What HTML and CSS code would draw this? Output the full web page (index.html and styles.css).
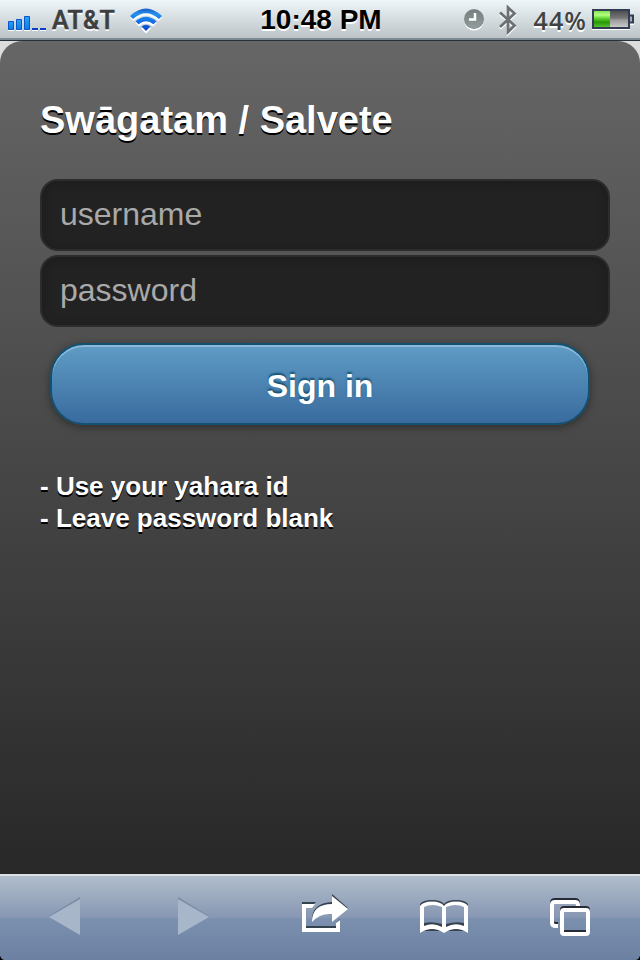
FILE: index.html
```html
<!DOCTYPE html>
<html lang="en">
<head>
<meta charset="utf-8">
<title>Sign in</title>
<link rel="stylesheet" href="styles.css">
</head>
<body>
<div class="phone">
  <header class="status">
    <div class="status-side">
      <svg class="signal" width="38" height="15" viewBox="0 0 38 15">
        <defs><linearGradient id="bar" x2="0" y2="1"><stop stop-color="#2ba2f3"/><stop offset="1" stop-color="#087bea"/></linearGradient></defs>
        <g fill="#fff"><path d="M0 14h6v1H0zM8 14h6v1H8zM16 14h6v1h-6zM24 14h6v1h-6zM32 14h6v1h-6z"/></g>
        <g fill="url(#bar)" stroke="#0757c9"><path d="M.5 5.500h5v8h-5z"/><path d="M8.500 3.500h5v10h-5z"/><path d="M16.500 .5h5v13h-5z"/></g>
        <path fill="#0b3fc5" d="M24 12h6v2h-6zM32 12h6v2h-6z"/>
      </svg>
      <span class="carrier">AT&amp;T</span>
      <svg class="wifi" width="34" height="26" viewBox="0 0 34 26">
        <defs><linearGradient id="wave" gradientUnits="userSpaceOnUse" x1="0" y1="0" x2="0" y2="24"><stop stop-color="#1b57bd"/><stop offset=".25" stop-color="#2591ee"/><stop offset=".5" stop-color="#1678e8"/><stop offset="1" stop-color="#0640c4"/></linearGradient></defs>
        <g fill="#fff" transform="translate(0 1.500)"><path d="M1 8Q17-7 33 8L29.500 11.500Q17 .5 4.500 11.500Z"/><path d="M6.500 13.500Q17 4 27.500 13.500L24 17Q17 11 10 17Z"/><path d="M12 19Q17 15 22 19L17 24Z"/></g>
        <g fill="url(#wave)"><path d="M1 8Q17-7 33 8L30 11Q17-.5 4 11Z"/><path d="M6.500 13.300Q17 4 27.500 13.300L24.500 16.300Q17 10 9.500 16.300Z"/><path d="M12.500 18.600Q17 15 21.500 18.600L17 23Z"/></g>
      </svg>
    </div>
    <div class="time">10:48 PM</div>
    <div class="status-side status-right">
      <svg class="alarm" width="20" height="22" viewBox="0 0 20 22">
        <defs><linearGradient id="clock" x2="0" y2="1"><stop stop-color="#77807f"/><stop offset="1" stop-color="#929d9d"/></linearGradient></defs>
        <circle cx="10" cy="11.500" r="10" fill="#fff"/><circle cx="10" cy="10" r="10" fill="#7b8584"/><circle cx="10" cy="10.500" r="9" fill="url(#clock)"/>
        <path fill="none" stroke="#fff" stroke-width="2.500" d="M11 4v6.500H5"/>
      </svg>
      <svg class="bluetooth" width="18" height="33" viewBox="0 0 18 33">
        <g fill="none" stroke-linejoin="miter" stroke-width="2.700"><path stroke="#fff" d="M1 10 15.500 23 9 29.500V4.500L15.500 11 1 24.500"/><path stroke="#6c7073" d="M1 8.500 15.500 21.500 9 28V3.500L15.500 9.500 1 23"/></g>
      </svg>
      <span class="percent">44%</span>
      <svg class="battery" width="42" height="22" viewBox="0 0 42 22">
        <defs>
          <linearGradient id="charge" x2="0" y2="1"><stop stop-color="#7fe256"/><stop offset=".25" stop-color="#b3ff82"/><stop offset=".45" stop-color="#63d633"/><stop offset=".7" stop-color="#279606"/><stop offset="1" stop-color="#55c12f"/></linearGradient>
          <linearGradient id="empty" x2="0" y2="1"><stop stop-color="#505050"/><stop offset=".45" stop-color="#777"/><stop offset=".55" stop-color="#999"/><stop offset="1" stop-color="#c9c9c9"/></linearGradient>
        </defs>
        <path fill="#fff" d="M0 19h38v2H0zM38 14h4v2h-4z"/>
        <path fill="#343c53" d="M0 0h38v20H0zM38 5.500h4v9h-4z"/><path fill="#a5abb5" d="M38 7.500h2v5h-2z"/>
        <path fill="url(#empty)" d="M2 2h34v16H2z"/><path fill="url(#charge)" d="M2 2h16v16H2z"/>
      </svg>
    </div>
  </header>
  <main class="page">
    <h1>Swāgatam / Salvete</h1>
    <form>
      <input type="text" placeholder="username" aria-label="username">
      <input type="password" placeholder="password" aria-label="password">
      <button type="button">Sign in</button>
    </form>
    <p class="hint">- Use your yahara id<br>- Leave password blank</p>
  </main>
  <nav class="toolbar">
    <svg viewBox="0 0 128 84"><path d="M0 80q1 3 4 4H0z"/><path fill="#788ca5" d="M49 40 80 21v3L49 41z"/><path fill="#a7b6c9" d="M49 41 80 23v36z"/></svg>
    <svg viewBox="0 0 128 84"><path fill="#788ca5" d="M81 40 50 21v3l31 17z"/><path fill="#a7b6c9" d="M81 41 50 23v36z"/></svg>
    <svg viewBox="0 0 128 84">
      <g fill="#36414e"><path d="M46 26h14l-4 4h-6v20h30v-3l4-4v11H46z"/><path d="M76 18 92 32 76 44v-9q-12-1-20 9 0-17 20-18z"/></g>
      <g fill="#fff"><path d="M46 28h13l-3 4h-6v20h30v-5l4-3v12H46z"/><path d="M76 20 92 33 76 46v-8q-12-1-20 8 0-18 20-18z"/></g>
    </svg>
    <svg viewBox="0 0 128 84">
      <g fill-rule="evenodd">
        <path fill="#36414e" d="M36 28q3-4 12-4 9 0 12 4 3-4 12-4 9 0 12 4v27H36zM40 30v17q8-2 18 1V30q-10-5-18 0zM62 30v18q10-3 18-1V30q-8-5-18 0z"/>
        <path fill="#fff" d="M36 30q3-4.500 12-4.500 9 0 12 4.500 3-4.500 12-4.500 9 0 12 4.500v27q-12-8-24 0-12-8-24 0zM40 31v19q9-4 18 1V31q-10-4-18 0zM62 31v20q9-5 18-1V31q-8-4-18 0z"/>
      </g>
    </svg>
    <svg viewBox="0 0 128 84">
      <g fill="none" stroke-width="4"><path stroke="#262b36" d="M46 48h-2q-4 0-4-3V27q0-3 3-3h20q3 0 3 3v3"/><path stroke="#fff" d="M46 50h-2q-4 0-4-3V29q0-3 3-3h20q3 0 3 3v1"/><rect x="50" y="32" width="26" height="24" rx="2" stroke="#262b36"/><rect x="50" y="34" width="26" height="24" rx="2" stroke="#fff"/></g>
      <path d="M128 80q-1 3-4 4h4z"/>
    </svg>
  </nav>
</div>
</body>
</html>
```
FILE: styles.css
```css
* { box-sizing: border-box; }
body { margin: 0; background: #ddd; font-family: "Liberation Sans", Arial, sans-serif; }
.phone { width: 640px; height: 960px; display: flex; flex-direction: column; background: #ddd; overflow: hidden; }
.status { height: 41px; flex: none; display: grid; grid-template: 39px / 1fr auto 1fr; padding: 0 6px 0 8px; background: linear-gradient(#eff6fa, #bdc4c8 38px); border-bottom: 1px solid #26323d; box-shadow: inset 0 -2px #7d8a94; text-shadow: 0 2px #fff; }
.status-side { display: flex; align-items: center; }
.signal { margin-top: 8px; }
.carrier { font: 500 25px/36px Roboto, sans-serif; color: #3d3f40; margin: 3px 0 0 6px; width: 64px; letter-spacing: .4px; -webkit-text-stroke: .6px #3d3f40; }
.wifi { margin: 2px 0 0 13px; }
.time { font-weight: bold; font-size: 28px; line-height: 38px; padding-top: 1px; color: #000; }
.status-right { justify-content: flex-end; }
.alarm { margin-top: 1px; }
.bluetooth { margin: 1px 0 0 15px; }
.percent { font: 600 25px/36px "Open Sans", sans-serif; color: #414343; margin: 0 5px 0 17px; letter-spacing: 1.1px; }
.battery { margin-top: 1px; }
.page { flex: 1; padding: 56px 30px 0 40px; border-radius: 22px 22px 0 0; background: linear-gradient(#666, #282828); color: #fff; }
h1 { margin: 0; font-size: 38px; line-height: 46px; text-shadow: 0 2px #000; }
form { display: flex; flex-direction: column; gap: 4px; margin-top: 36px; }
input { height: 72px; padding: 0 18px 2px; border: 2px solid #2c2c2c; border-radius: 18px; background: #222; box-shadow: inset 0 2px 8px #1c1c1c; font: 32px "Liberation Sans", Arial, sans-serif; color: #fff; }
input::placeholder { color: #a9a9a9; opacity: 1; }
button { height: 82px; margin: 12px 20px 0 10px; padding: 4px 0 0; border: 2px solid #145072; border-radius: 34px; background: linear-gradient(#5f9cc5, #396b9e); box-shadow: inset 0 2px #8bb8d6, 0 2px 8px rgba(0,0,0,.4); color: #fff; font: bold 32px "Liberation Sans", Arial, sans-serif; text-shadow: 0 -2px 2px #145072; }
.hint { margin: 45px 0 0; font-weight: bold; font-size: 26px; line-height: 32px; text-shadow: 0 2px #000; }
.toolbar { flex: none; height: 86px; display: grid; grid-template-columns: repeat(5, 128px); border-top: 2px solid #dcdfe3; background: linear-gradient(#b0bdcb, #8797b2 42px, #7c91b0 42px, #6c81a1); }
.toolbar svg { width: 128px; height: 84px; }
```
